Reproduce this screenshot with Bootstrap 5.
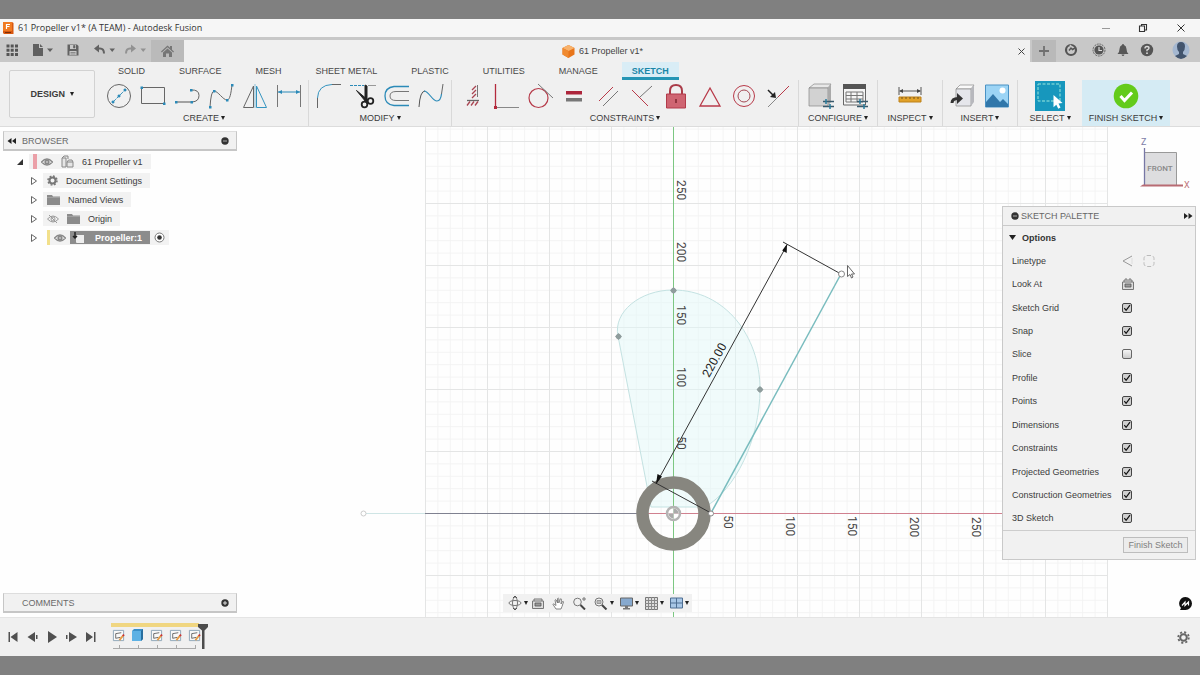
<!DOCTYPE html>
<html lang="en">
<head>
<meta charset="utf-8">
<meta name="viewport" content="width=device-width, initial-scale=1">
<title>61 Propeller v1* (A TEAM) - Autodesk Fusion</title>
<link href="https://cdn.jsdelivr.net/npm/bootstrap@5.3.0/dist/css/bootstrap.min.css" rel="stylesheet">
<style>
  body { font-family: "Liberation Sans", Arial, sans-serif; font-size: 9px; line-height: 12px; color: #3c3c3c; background: #808080; padding: 19px 0; }
  button { border: 0; background: none; padding: 0; color: inherit; font: inherit; line-height: inherit; }
  svg { display: block; flex: none; }
  .window-title { height: 18px; background: #f6f6f6; font-family: "Open Sans", sans-serif; color: #333; padding: 0 14px 0 2px; }
  .tab-strip { height: 25px; background: #c8c8c8; color: #666; }
  .quick-tools { padding-left: 6px; width: 151px; gap: 14px; }
  .home-tab { width: 33px; margin-top: 3px; background: #bababa; }
  .doc-tab { margin-top: 3px; background: #f0f0f0; color: #444; padding-right: 4px; }
  .doc-title { padding-left: 4px; }
  .new-tab { width: 24px; margin: 3px 0 0 2px; background: #b9b9b9; }
  .account-tools { padding: 0 10px 0 8px; gap: 10px; }
  .ribbon { height: 65px; background: #f0f0f0; border-bottom: 1px solid #dcdcdc; }
  .design-btn { width: 86px; height: 48px; margin: 8px 1px 0 9px; border: 1px solid #d2d2d2; border-radius: 2px; font-weight: bold; background: #f2f2f2; }
  .ribbon-tabs { padding-left: 12px; gap: 14px; height: 18px; }
  .ribbon-tabs a { color: #484848; text-decoration: none; padding: 3px 10px 0; }
  .ribbon-tabs a.active { background: #d9edf6; color: #1a86a8; font-weight: bold; border-bottom: 3px solid #2495b5; }
  .tool-group { padding: 0 3px; height: 46px; }
  .tool-group + .tool-group { border-left: 1px solid #d9d9d9; }
  .tool-group.group-first { padding: 0 2px 0 6px; }
  .tool-group.group-wide { padding: 0 5px; }
  .group-single { min-width: 65px; }
  .tool-group.finish { background: #d5ebf4; min-width: 88px; border: 0; }
  .tools { height: 32px; }
  .tool { width: 34px; height: 32px; display: flex; align-items: center; justify-content: center; }
  .caret { display: inline-block; border: 2px solid transparent; border-top: 4px solid #222; border-bottom: 0; margin: 0 0 1px 2px; }
  .workspace { min-height: 490px; background: #fefefe; }
  .drawing { position: absolute; inset: 0; width: 100%; height: 100%; }
  .dock-left { padding-left: 3px; }
  .panel-box { background: #f1f1f1; border: 1px solid #c6c6c6; }
  .side-panel { width: 234px; height: 20px; color: #6a6a6a; padding: 0 7px 0 3px; gap: 6px; border-width: 1px 1px 2px 1px; border-top-color: #ddd; }
  .side-panel .no-arrow { padding-left: 15px; }
  .tree { padding-top: 1px; }
  .tree-row { height: 19px; gap: 5px; }
  .tree-row > .node { background: #f2f2f2; height: 15px; gap: 8px; padding: 0 8px 0 4px; }
  .tree-row > .node-flagged { padding-left: 0; padding-right: 4px; }
  .level-0 { padding-left: 13px; }
  .level-1 { padding-left: 27px; }
  .selected-node { background: #8c8c8c; color: #fff; font-weight: bold; height: 13px; padding: 0 8px 0 2px; gap: 10px; }
  .palette { width: 194px; background: #f1f1f1; border: 1px solid #c9c9c9; }
  .palette-head { height: 19px; border-bottom: 1px solid #cacaca; color: #666; padding: 0 2px 0 8px; gap: 2px; }
  .palette-options { height: 23px; padding-left: 6px; gap: 6px; font-weight: bold; color: #333; }
  .palette-rows { height: 281px; padding-left: 9px; }
  .palette-rows label, .palette-rows .row-label { width: 110px; }
  .palette-rows input { appearance: none; width: 10px; height: 10px; margin: 0; border: 1px solid #666; border-radius: 2px; background: linear-gradient(#f5f5f5, #ccc); }
  .palette-rows input:checked { border-color: #444; background: #d0d0d0 url("data:image/svg+xml,%3Csvg xmlns='http://www.w3.org/2000/svg' viewBox='0 0 8 8'%3E%3Cpath d='M1.3 4.2 3.1 6.4 7 1.2' fill='none' stroke='%23111' stroke-width='1.2'/%3E%3C/svg%3E") center / 8px 8px no-repeat; }
  .palette-foot { height: 29px; border-top: 1px solid #cdcdcd; padding-right: 7px; }
  .finish-btn { width: 65px; height: 16px; border: 1px solid #bdbdbd; color: #808080; background: #ececec; }
  .view-cube { margin: 8px 4px 16px 0; }
  .nav-bar { background: #f1f1f1; height: 18px; padding: 0 3px 0 5px; }
  .nav-bar .caret { margin: 0 0 0 2px; }
  .nav-views { gap: 6px; }
  .timeline { height: 39px; background: #f0f0f0; border-top: 1px solid #e4e4e4; padding: 0 10px 0 6px; }
  .transport { gap: 6px; }
  .features { margin-left: 12px; }
</style>
</head>
<body>
<svg width="0" height="0" class="position-absolute" aria-hidden="true">
  <defs>
    <symbol id="eye" viewBox="0 0 12 10"><path d="M.5 5Q6-1 11.500 5 6 11 .5 5Z" fill="none" stroke="#888" stroke-width="1.300"/><circle cx="6" cy="5" r="2.600" fill="#888"/><circle cx="6" cy="5" r=".8" fill="#eee"/></symbol>
    <symbol id="folder" viewBox="0 0 13 11"><path d="M0 1h5l1 1.500h7V11H0Z" fill="#8b8b8b"/><path d="M0 3.500h13" stroke="#aaa" stroke-width=".7"/></symbol>
    <symbol id="closed" viewBox="0 0 8 10"><path d="M1.500 1.500 6.500 5 1.500 8.500Z" fill="#fff" stroke="#666"/></symbol>
    <symbol id="sketch-step" viewBox="0 0 14 14"><path d="M1.500 1.500h11v11h-11Z" fill="#f8f8f8" stroke="#8ba4b5"/><path d="M4 10V5l6-1M4 10l5-1" fill="none" stroke="#555" stroke-width=".9"/><path d="m8 12 4-5" stroke="#e59b45" stroke-width="2"/><path d="m11.500 7.500 1.500-1.500" stroke="#c33" stroke-width="2"/></symbol>
  </defs>
</svg>

<div class="app d-flex flex-column">
  <header class="window-title d-flex align-items-center">
    <svg width="12" height="14" viewBox="0 0 12 14"><path d="M1 1h9l1.500 1v11H2L1 12Z" fill="#d8570f"/><path d="M1 1h9v9H1Z" fill="#f07a22"/><path d="M4.500 8V3.500H8M4.500 5.500h3" stroke="#fff" stroke-width="1.200" fill="none"/><path d="M3 11.500h6" stroke="#7b2d05"/></svg>
    <span class="ms-1 flex-fill">61 Propeller v1* (A TEAM) - Autodesk Fusion</span>
    <button aria-label="Minimize" class="me-4"><svg width="14" height="10" viewBox="0 0 14 10"><path d="M6 5.500h8" stroke="#999"/></svg></button>
    <button aria-label="Restore" class="ms-1 me-4"><svg width="10" height="10" viewBox="0 0 10 10"><path d="M1.500 3h5v5.500h-5ZM3.500 3V1.500h5v5.500h-2" fill="none" stroke="#333" stroke-width="1.100"/></svg></button>
    <button aria-label="Close"><svg width="10" height="10" viewBox="0 0 10 10" class="ms-1"><path d="m1.500 1.500 7 7m0-7-7 7" stroke="#333"/></svg></button>
  </header>

  <div class="tab-strip d-flex">
    <div class="quick-tools d-flex align-items-center">
      <button aria-label="Data panel"><svg width="12" height="12" viewBox="0 0 12 12" fill="#555"><path d="M.5.5h3v3h-3zM4.700.5h3v3h-3zM9 .5h3v3H9zM.5 4.700h3v3h-3zM4.700 4.700h3v3h-3zM9 4.700h3v3H9zM.5 9h3v3h-3zM4.700 9h3v3h-3zM9 9h3v3H9z"/></svg></button>
      <button aria-label="File" class="d-flex align-items-center"><svg width="21" height="14" viewBox="0 0 21 14" fill="#606060"><path d="M1 1h6v4h4v8H1ZM8 1l3 3H8ZM15 5.500h6L18 9Z"/></svg></button>
      <button aria-label="Save"><svg width="12" height="12" viewBox="0 0 12 12"><path d="M.5.5H10L11.500 2v9.500H.5Z" fill="#626262"/><path d="M3 1h6v4H3ZM2.500 7h7v4h-7Z" fill="#c8c8c8"/><path d="M6.500 1.500h1.500v2.500H6.500ZM3.500 8.500h5M3.500 10h5" fill="#626262" stroke="#626262" stroke-width=".6"/></svg></button>
      <div class="d-flex gap-2">
        <button aria-label="Undo"><svg width="22" height="12" viewBox="0 0 22 12"><path d="M3 4.500h4q4 0 4 5" fill="none" stroke="#626262" stroke-width="2"/><path d="M1 4.500 6 .5v8ZM16.500 4.500H22L19.200 8Z" fill="#626262"/></svg></button>
        <button aria-label="Redo"><svg width="24" height="12" viewBox="0 0 24 12"><path d="M3 9.500q0-5 4-5h4" fill="none" stroke="#929292" stroke-width="2"/><path d="m13 4.500-5-4v8ZM17.500 4.500H23L20.200 8Z" fill="#929292"/></svg></button>
      </div>
    </div>
    <button class="home-tab d-flex justify-content-center align-items-center" aria-label="Home"><svg width="13" height="12" viewBox="0 0 13 12" fill="#767676"><path d="m0 6.500 6.500-6 2.500 2.300V1h2v3.700l2 1.800-.8.900L6.500 2.300.8 7.400ZM2 7.500 6.500 3.500 11 7.500V12H8V8.500H5V12H2Z"/></svg></button>
    <div class="doc-tab d-flex align-items-center flex-fill">
      <div class="doc-title d-flex flex-fill justify-content-center align-items-center">
        <svg width="13" height="13" viewBox="0 0 13 13" class="me-1"><path d="m6.500 0 6 3v6.500l-6 3.500-6-3.500V3Z" fill="#e8751a"/><path d="m6.500 0 6 3-6 3-6-3Z" fill="#f8b26b"/><path d="m.5 3 6 3v7l-6-3.500Z" fill="#f08a30"/></svg>
        61 Propeller v1*
      </div>
      <button aria-label="Close document"><svg width="9" height="9" viewBox="0 0 9 9"><path d="m1.500 1.500 6 6m0-6-6 6" stroke="#444"/></svg></button>
    </div>
    <button class="new-tab d-flex justify-content-center align-items-center" aria-label="New tab"><svg width="10" height="10" viewBox="0 0 10 10"><path d="M0 5h10M5 0v10" stroke="#707070" stroke-width="1.800"/></svg></button>
    <div class="account-tools d-flex align-items-center">
      <button aria-label="Extensions"><svg width="14" height="14" viewBox="0 0 14 14"><circle cx="7" cy="7" r="5" fill="none" stroke="#555" stroke-width="2.200"/><path d="M6 2 8.500 5" stroke="#c8c8c8" stroke-width="1.500"/><path d="m5 7.500 2-2.500 1.500 1.500L11 5" stroke="#555" stroke-width="1.500" fill="none"/></svg></button>
      <button aria-label="Job status" class="ms-1"><svg width="14" height="14" viewBox="0 0 14 14"><circle cx="7" cy="7" r="6" fill="none" stroke="#666" stroke-dasharray="2 .8"/><circle cx="7" cy="7" r="4.600" fill="#555"/><path d="M7 4v3.500h3" stroke="#ddd" stroke-width="1.200" fill="none"/></svg></button>
      <button aria-label="Notifications"><svg width="14" height="14" viewBox="0 0 14 14"><path d="M7 1q1 0 1 1 2.500.8 2.500 4 0 3 2 5h-11q2-2 2-5 0-3.200 2.500-4 0-1 1-1ZM5.500 11.500h3Q8 13 7 13t-1.500-1.500Z" fill="#585858"/></svg></button>
      <button aria-label="Help"><svg width="14" height="14" viewBox="0 0 14 14"><circle cx="7" cy="7" r="6.200" fill="#555"/><path d="M5 5.500q0-2 2-2t2 1.600Q9 6.200 7 7v1.200" fill="none" stroke="#d8d8d8" stroke-width="1.400"/><circle cx="7" cy="10.200" r=".9" fill="#ddd"/></svg></button>
      <button aria-label="Account" class="ms-2"><svg width="18" height="20" viewBox="0 0 18 20"><circle cx="9" cy="10" r="8.500" fill="#a4b7d0"/><path d="M9 2q4 0 4 4.500Q13 10 11 12v2l4 2q-3 3-6 3t-6-3l4-2v-2Q5 10 5 6.500 5 2 9 2Z" fill="#42546d"/></svg></button>
    </div>
  </div>

  <div class="ribbon d-flex">
    <button class="design-btn">DESIGN <span class="caret"></span></button>
    <div class="flex-fill">
      <nav class="ribbon-tabs d-flex">
        <a href="#">SOLID</a><a href="#">SURFACE</a><a href="#">MESH</a><a href="#">SHEET METAL</a><a href="#">PLASTIC</a><a href="#">UTILITIES</a><a href="#">MANAGE</a><a href="#" class="active">SKETCH</a>
      </nav>
      <div class="d-flex text-center">
        <div class="tool-group group-first">
          <div class="tools d-flex">
            <button class="tool" aria-label="Circle"><svg width="26" height="26" viewBox="0 0 26 26"><circle cx="13" cy="13" r="11.500" fill="none" stroke="#666"/><path d="M7 19 19 7" stroke="#3a94bd" stroke-dasharray="4 1"/><path d="M6 18h2v2H6zM12 12h2v2h-2zM18 6h2v2h-2z" fill="#2b8ab8" stroke="#2b8ab8" stroke-width=".7"/></svg></button>
            <button class="tool" aria-label="Rectangle"><svg width="26" height="26" viewBox="0 0 26 26"><path d="M1.500 4.500h23v16h-23Z" fill="none" stroke="#666"/><path d="M.5 3.500H3V6H.5zM23 19.500h2.500V22H23z" fill="#2b8ab8"/></svg></button>
            <button class="tool" aria-label="Slot"><svg width="26" height="26" viewBox="0 0 26 26"><path d="M2 19h16" stroke="#555"/><path d="M18 19q7-.5 7-6.500T17 7" fill="none" stroke="#666"/><path d="M1 18h2.500v2.500H1zM16.500 18H19v2.500h-2.500zM16 6h2.500v2.500H16z" fill="#2b8ab8"/></svg></button>
            <button class="tool" aria-label="Spline"><svg width="26" height="26" viewBox="0 0 26 26"><path d="M2 24Q3 8 6 8c4 0 9 9 13 9 3 0 4-7 5-15" fill="none" stroke="#666"/><path d="M1 23h2.500v2.500H1zM5 7h2.500v2.500H5zM18 16h2.500v2.500H18zM23 1h2.500v2.500H23z" fill="#2b8ab8"/></svg></button>
            <button class="tool" aria-label="Mirror"><svg width="26" height="26" viewBox="0 0 26 26"><path d="M11.500 3v21.500H1.500Z" fill="none" stroke="#666"/><path d="M14.500 3v21.500h10Z" fill="none" stroke="#3494c0"/><path d="M13 1v24" stroke="#8cc0d8"/></svg></button>
            <button class="tool" aria-label="Dimension"><svg width="26" height="26" viewBox="0 0 26 26"><path d="M1.500 2v22M24.500 2v22" stroke="#777"/><path d="M2 9h22" stroke="#2b8ab8"/><path d="m2 9 4-2v4ZM24 9l-4-2v4Z" fill="#2b8ab8"/></svg></button>
          </div>
          <div>CREATE<span class="caret"></span></div>
        </div>
        <div class="tool-group">
          <div class="tools d-flex">
            <button class="tool" aria-label="Fillet"><svg width="26" height="26" viewBox="0 0 26 26" fill="none"><path d="M1.500 25V15M16 1.500h9" stroke="#666"/><path d="M1.500 15Q2 2 16 1.500" stroke="#3494c0"/></svg></button>
            <button class="tool" aria-label="Trim"><svg width="26" height="26" viewBox="0 0 26 26" fill="none"><path d="M0 2.500h14" stroke="#2b8ab8" stroke-dasharray="3 1"/><path d="M18 2.500h8" stroke="#999"/><path d="M6.500 7.500 18 17l-2 2Z" fill="#222" stroke="#222"/><path d="m15 2 2 1v14l-2 1Z" fill="#222" stroke="#222"/><circle cx="14.500" cy="21.500" r="2.800" stroke="#222" stroke-width="1.800"/><circle cx="20.500" cy="18" r="2.800" stroke="#222" stroke-width="1.800"/></svg></button>
            <button class="tool" aria-label="Offset"><svg width="26" height="26" viewBox="0 0 26 26" fill="none"><path d="M25 3.500H10Q1 4.500 1 13t9 9.500h15" stroke="#2b8ab8" stroke-width="1.300"/><path d="M25 8.500H12q-6 0-6 4.500t6 4.500h13" stroke="#777"/></svg></button>
            <button class="tool" aria-label="Edit curve"><svg width="26" height="26" viewBox="0 0 26 26" fill="none"><path d="M1 24Q2 8 7 8" stroke="#555"/><path d="M6 8c5 0 8 10 13 10 3 0 4-3 4.500-7" stroke="#2b8ab8" stroke-width="1.200"/><path d="M23.500 11 25 1" stroke="#666"/></svg></button>
          </div>
          <div>MODIFY<span class="caret"></span></div>
        </div>
        <div class="tool-group">
          <div class="tools d-flex">
            <button class="tool" aria-label="Horizontal/Vertical"><svg width="26" height="26" viewBox="0 0 26 26" fill="none" stroke="#a94552"><path d="M18.500 2v12" stroke="#777"/><path d="M8 17.500h12" stroke="#666" stroke-width="1.300"/><path d="m13 7 4-4M13 11l4-4M13 15l4-4M8 22.500l3-4M12 22.500l3-4M16 22.500l3-4" stroke-width="1.300"/></svg></button>
            <button class="tool" aria-label="Perpendicular"><svg width="26" height="26" viewBox="0 0 26 26"><path d="M2.500 1v23" stroke="#b42a3d" stroke-width="1.300"/><path d="M2 24.500h24" stroke="#888"/><path d="M1 23h3v3H1z" fill="#b42a3d"/></svg></button>
            <button class="tool" aria-label="Tangent"><svg width="26" height="26" viewBox="0 0 26 26" fill="none"><circle cx="11.500" cy="15" r="9.500" stroke="#b63a49" stroke-width="1.200"/><path d="m11 1 15 14" stroke="#777"/></svg></button>
            <button class="tool" aria-label="Equal"><svg width="26" height="26" viewBox="0 0 26 26"><path d="M5 8h16v3.500H5Z" fill="#ad253b"/><path d="M5 15h16v3.500H5Z" fill="#777"/></svg></button>
            <button class="tool" aria-label="Parallel"><svg width="26" height="26" viewBox="0 0 26 26"><path d="M4 18 18 4M8 23 23 8" stroke="#777"/><path d="M4 18 18 4" stroke="#b83a49"/></svg></button>
            <button class="tool" aria-label="Midpoint"><svg width="26" height="26" viewBox="0 0 26 26"><path d="m3 7 16 16" stroke="#b83a49"/><path d="M11 14 23 3" stroke="#777"/></svg></button>
            <button class="tool" aria-label="Fix"><svg width="26" height="26" viewBox="0 0 26 26"><path d="M7 12V8q0-6 6-6t6 6v4" fill="none" stroke="#aa3c49" stroke-width="2"/><path d="M3.500 11h19v14h-19Z" fill="#cf6572" stroke="#b23b4a"/><path d="M13 16v4" stroke="#7e2631" stroke-width="1.500"/></svg></button>
            <button class="tool" aria-label="Symmetry"><svg width="26" height="26" viewBox="0 0 26 26"><path d="M13 5 23 23H3Z" fill="none" stroke="#b83a49" stroke-width="1.300"/></svg></button>
            <button class="tool" aria-label="Concentric"><svg width="26" height="26" viewBox="0 0 26 26" fill="none"><circle cx="13" cy="13" r="10.500" stroke="#b83a49"/><circle cx="13" cy="13" r="6" stroke="#a44853"/></svg></button>
            <button class="tool" aria-label="Collinear"><svg width="26" height="26" viewBox="0 0 26 26"><path d="m3 24 10-10" stroke="#888"/><path d="M13 14 24 3" stroke="#b83a49"/><path d="m3 7 5 5" stroke="#222" stroke-width="1.500"/><path d="m11 15-6-1 5-5Z" fill="#222"/></svg></button>
          </div>
          <div>CONSTRAINTS<span class="caret"></span></div>
        </div>
        <div class="tool-group group-wide">
          <div class="tools d-flex">
            <button class="tool" aria-label="Configure design"><svg width="26" height="26" viewBox="0 0 26 26"><path d="m1 5 5-4h17l-3 4Z" fill="#e8e8e8" stroke="#888" stroke-width=".7"/><path d="M1 5h19v18H1Z" fill="#d2d2d2" stroke="#888" stroke-width=".7"/><path d="m20 5 3-4v18l-3 4Z" fill="#aaa"/><path d="M15 18.500h11M15 23.500h11" stroke="#38596b" stroke-width="1.300"/><path d="M18 16v5M22 21v5" stroke="#277c9d" stroke-width="1.500"/></svg></button>
            <button class="tool" aria-label="Configuration table"><svg width="26" height="26" viewBox="0 0 26 26"><path d="M1.500 2h22v20h-22Z" fill="#f5f5f5" stroke="#666"/><path d="M1 1h23v5H1Z" fill="#555"/><path d="M4 9h17v10H4ZM4 12.500h17M4 16h17M9 9v10M15 9v10" fill="none" stroke="#777"/><path d="M15 18.500h11M15 23.500h11" stroke="#38596b" stroke-width="1.300"/><path d="M18 16v5M22 21v5" stroke="#277c9d" stroke-width="1.500"/></svg></button>
          </div>
          <div>CONFIGURE<span class="caret"></span></div>
        </div>
        <div class="tool-group group-single">
          <div class="tools d-flex justify-content-center"><button class="tool" aria-label="Measure"><svg width="26" height="26" viewBox="0 0 26 26"><path d="M2 4v8M24 4v8M3 8h20" stroke="#555"/><path d="m2 8 4-2v4ZM24 8l-4-2v4Z" fill="#444"/><path d="M2 14h22v5H2Z" fill="#e1a128" stroke="#bd811b"/><path d="M5 14v2M9 14v2M13 14v2M17 14v2M21 14v2" stroke="#765216"/></svg></button></div>
          <div>INSPECT<span class="caret"></span></div>
        </div>
        <div class="tool-group">
          <div class="tools d-flex">
            <button class="tool" aria-label="Insert component"><svg width="26" height="26" viewBox="0 0 26 26"><path d="m6 6 4-4h14l-3 4Z" fill="#fafafa" stroke="#888" stroke-width=".7"/><path d="M6 6h15v17H6Z" fill="#e5e6eb" stroke="#888" stroke-width=".7"/><path d="m21 6 3-4v17l-3 4Z" fill="#b7b8bd"/><path d="M2 20q0-4.500 6-4.500" fill="none" stroke="#333" stroke-width="3"/><path d="m7 10 6 5.500L7 21Z" fill="#333"/></svg></button>
            <button class="tool" aria-label="Canvas"><svg width="26" height="26" viewBox="0 0 26 26"><path d="M1.500 2h23v22h-23Z" fill="#9cd4f5" stroke="#4a92c4"/><path d="m2 19 7-8 7 8 3-3 5 5v3H2Z" fill="#3177aa"/><circle cx="18.500" cy="7.500" r="3" fill="#fff"/></svg></button>
          </div>
          <div>INSERT<span class="caret"></span></div>
        </div>
        <div class="tool-group group-single">
          <div class="tools d-flex justify-content-center"><button class="tool" aria-label="Select"><svg width="30" height="30" viewBox="0 0 30 30"><path d="M0 0h30v30H0Z" fill="#1797bd"/><path d="M3 3h22v17H3Z" fill="none" stroke="#9be8dd" stroke-dasharray="3 1.500"/><path d="m18.500 14 9 8-4 .5 2 4-2.200 1.200-2-4-2.800 2.500Z" fill="#fff"/></svg></button></div>
          <div>SELECT<span class="caret"></span></div>
        </div>
        <div class="tool-group finish">
          <div class="tools d-flex justify-content-center"><button class="tool" aria-label="Finish sketch"><svg width="26" height="26" viewBox="0 0 26 26"><circle cx="13" cy="13" r="12.300" fill="#63cb1b"/><path d="m7.500 13 4 4.500 7.500-8" fill="none" stroke="#fff" stroke-width="3"/></svg></button></div>
          <div class="text-nowrap">FINISH SKETCH<span class="caret"></span></div>
        </div>
      </div>
    </div>
  </div>

  <main class="workspace position-relative d-flex flex-column">
    <svg class="drawing" viewBox="0 127 1200 490" role="img" aria-label="Sketch canvas">
      <defs>
        <pattern id="fine" x="673" y="513" width="12.4" height="12.4" patternUnits="userSpaceOnUse"><path d="M0 .5H12.400M.5 0V12.400" stroke="#f3f3f3"/></pattern>
        <pattern id="coarse" x="673" y="513" width="62" height="62" patternUnits="userSpaceOnUse"><path d="M0 .5H62M.5 0V62" stroke="#e4e5e5"/></pattern>
      </defs>
      <path d="M425 127h683v490H425Z" fill="url(#fine)"/>
      <path d="M425 127h683v490H425Z" fill="url(#coarse)"/>
      <path d="M618 336C613 312 640 290 673 290C725 290 760 336 760 389C760 440 735 490 705 507H651Z" fill="#dff8f8" fill-opacity=".45" stroke="#c4e2e2"/>
      <path d="M363 513.500h62" stroke="#cfe5e5"/><path d="M425 513.500h212" stroke="#7f8190"/><path d="M637 513.500h366" stroke="#d0808f"/>
      <path d="M673.500 127v490" stroke="#7cc782"/>
      <circle cx="673.500" cy="513.500" r="31" fill="none" stroke="#87867f" stroke-width="12.500"/>
      <circle cx="673.500" cy="513.500" r="6.500" fill="#fff" fill-opacity=".6" stroke="#b4b4b4" stroke-width="2.500"/>
      <path d="M673.500 513.500v-5a5 5 0 0 1 5 5ZM673.500 513.500v5a5 5 0 0 1-5-5Z" fill="#aaa"/>
      <path d="M711 513 841 274" stroke="#79bcbe" stroke-width="1.500"/>
      <path d="M652 481 711 513M783 242 841 274M656 484 787 245" stroke="#333" fill="none"/>
      <path d="m787 244-.3 9-4.500-2.500ZM656 484l6-7.500-4.500-2.500Z" fill="#111"/>
      <g fill="#8f9d9d"><path d="m673.500 287 3.500 3.500-3.500 3.500-3.500-3.500ZM618.500 333l3.500 3.500-3.500 3.500-3.500-3.500ZM760 386l3.500 3.500-3.500 3.500-3.500-3.500Z"/><circle cx="673.500" cy="290.500" r="2.500"/><circle cx="618.500" cy="336.500" r="2.500"/><circle cx="760" cy="389.500" r="2.500"/></g>
      <g fill="#fff" stroke="#888"><circle cx="711" cy="513.500" r="2.500"/><circle cx="841.500" cy="274" r="3"/><circle cx="363.500" cy="513.500" r="2.500" stroke="#ccc"/></g>
      <path d="M847.500 265.500v11l2.500-2 1.500 3.500 1.500-1-1.500-3h3Z" fill="#fff" stroke="#555" stroke-width=".9"/>
      <g font-family="Roboto, sans-serif" font-size="12" fill="#444" text-anchor="middle">
        <text transform="translate(677 190) rotate(90)">250</text><text transform="translate(677 252) rotate(90)">200</text><text transform="translate(677 315) rotate(90)">150</text><text transform="translate(677 377) rotate(90)">100</text><text transform="translate(677 443) rotate(90)">50</text>
        <text transform="translate(724 522) rotate(90)">50</text><text transform="translate(786 526) rotate(90)">100</text><text transform="translate(848 526) rotate(90)">150</text><text transform="translate(910 527) rotate(90)">200</text><text transform="translate(972 527) rotate(90)">250</text>
        <text transform="translate(718 362) rotate(-61)" fill="#222">220.00</text>
      </g>
    </svg>

    <div class="position-relative d-flex justify-content-between flex-fill">
      <aside class="dock-left mt-1">
        <div class="panel-box side-panel d-flex align-items-center">
          <svg width="9" height="6" viewBox="0 0 9 6"><path d="m4.500 0-4 3 4 3ZM9 0 5 3l4 3Z" fill="#222"/></svg>
          <span class="flex-fill">BROWSER</span>
          <button aria-label="Collapse browser"><svg width="8" height="8" viewBox="0 0 8 8"><circle cx="4" cy="4" r="3.700" fill="#333"/><path d="M2 4h4" stroke="#aaa"/></svg></button>
        </div>
        <div class="tree">
          <div class="tree-row level-0 d-flex align-items-center">
            <svg width="8" height="8" viewBox="0 0 8 8"><path d="M7 1v6H1Z" fill="#333"/></svg>
            <div class="node d-flex align-items-center ps-1">
              <div class="d-flex align-items-center gap-1"><svg width="4" height="15" viewBox="0 0 4 15"><path d="M0 0h4v15H0Z" fill="#eba0a8"/></svg><svg width="12" height="10"><use href="#eye"/></svg></div>
              <svg width="13" height="13" viewBox="0 0 13 13"><path d="M1 3 3 1h4v3M1 3h4v9H1ZM6 7h6v5H6ZM6 7l1.500-2H11l1 2" fill="#e5e5e5" stroke="#888"/></svg><span>61 Propeller v1</span>
            </div>
          </div>
          <div class="tree-row level-1 d-flex align-items-center"><svg width="8" height="10"><use href="#closed"/></svg><div class="node d-flex align-items-center"><svg width="11" height="11" viewBox="0 0 11 11"><circle cx="5.500" cy="5.500" r="3" fill="none" stroke="#777" stroke-width="2"/><circle cx="5.500" cy="5.500" r="4.500" fill="none" stroke="#777" stroke-width="1.500" stroke-dasharray="1.800 1.730"/></svg><span>Document Settings</span></div></div>
          <div class="tree-row level-1 d-flex align-items-center"><svg width="8" height="10"><use href="#closed"/></svg><div class="node d-flex align-items-center"><svg width="13" height="11"><use href="#folder"/></svg><span>Named Views</span></div></div>
          <div class="tree-row level-1 d-flex align-items-center"><svg width="8" height="10"><use href="#closed"/></svg><div class="node d-flex align-items-center"><svg width="12" height="10" viewBox="0 0 12 10" fill="none" stroke="#999"><path d="M.5 5Q6-1 11.500 5 6 11 .5 5ZM2 1l8 8"/><circle cx="6" cy="5" r="2"/></svg><svg width="13" height="11"><use href="#folder"/></svg><span>Origin</span></div></div>
          <div class="tree-row level-1 d-flex align-items-center"><svg width="8" height="10"><use href="#closed"/></svg><div class="node node-flagged d-flex align-items-center gap-1 ms-1"><svg width="3" height="15" viewBox="0 0 3 15"><path d="M0 0h3v15H0Z" fill="#f2e08b"/></svg><svg width="12" height="10"><use href="#eye"/></svg><div class="selected-node d-flex align-items-center"><svg width="13" height="12" viewBox="0 0 13 12"><path d="M4 4q0-1 1-1h7v8H5q-1 0-1-1Z" fill="#eee"/><path d="M3 0v6M1 4l2 2 2-2" stroke="#222" fill="none" stroke-width="1.500"/></svg>Propeller:1</div><svg width="11" height="11" viewBox="0 0 11 11"><circle cx="5.500" cy="5.500" r="4.500" fill="#fff" stroke="#777"/><circle cx="5.500" cy="5.500" r="2.300" fill="#333"/></svg></div></div>
        </div>
      </aside>

      <div class="d-flex flex-column align-items-end me-1">
        <svg class="view-cube" width="54" height="55" viewBox="0 0 54 55"><path d="M6.500 17.500h32v33h-32Z" fill="#dddddf" stroke="#999"/><path d="M6.500 13v38" stroke="#7777a5" stroke-width="1.300"/><path d="M5 49.500h40v2H2Z" fill="#b86b73"/><g font-family="Roboto, sans-serif" font-size="9"><text x="22" y="36" font-size="8" text-anchor="middle" font-weight="500" fill="#888">FRONT</text><text x="3" y="10" fill="#7d7da8">Z</text><text x="46" y="53" fill="#be747b">X</text></g></svg>
        <aside class="palette">
          <div class="palette-head d-flex align-items-center"><svg width="8" height="8" viewBox="0 0 8 8"><circle cx="4" cy="4" r="3.700" fill="#333"/><path d="M2 4h4" stroke="#aaa"/></svg><span class="flex-fill">SKETCH PALETTE</span><svg width="9" height="6" viewBox="0 0 9 6"><path d="m0 0 4 3-4 3ZM4.500 0l4 3-4 3Z" fill="#222"/></svg></div>
          <div class="palette-options d-flex align-items-center"><svg width="7" height="5" viewBox="0 0 7 5"><path d="M0 0h7L3.500 5Z" fill="#222"/></svg><span>Options</span></div>
          <div class="palette-rows d-flex flex-column">
            <div class="d-flex flex-fill align-items-center"><span class="row-label">Linetype</span><svg width="12" height="12" viewBox="0 0 12 12"><path d="m10 1-9 5 9 5" fill="none" stroke="#999"/><path d="M10 3v6" stroke="#ddd"/></svg><svg width="13" height="12" viewBox="0 0 13 12" class="ms-2"><rect x="2" y=".5" width="10" height="11" rx="3" fill="none" stroke="#bbb" stroke-dasharray="4 2"/></svg></div>
            <div class="d-flex flex-fill align-items-center"><span class="row-label">Look At</span><button aria-label="Look At"><svg width="12" height="12" viewBox="0 0 12 12"><path d="M.5 4h11v7.500H.5ZM2 4V2h8v2M4 2V0M8 2V0" fill="#ddd" stroke="#777"/><path d="M3 6h6v3H3Z" fill="#999" stroke="#555" stroke-width=".8"/></svg></button></div>
            <div class="d-flex flex-fill align-items-center"><label for="grid">Sketch Grid</label><input type="checkbox" id="grid" checked></div>
            <div class="d-flex flex-fill align-items-center"><label for="snap">Snap</label><input type="checkbox" id="snap" checked></div>
            <div class="d-flex flex-fill align-items-center"><label for="slice">Slice</label><input type="checkbox" id="slice"></div>
            <div class="d-flex flex-fill align-items-center"><label for="profile">Profile</label><input type="checkbox" id="profile" checked></div>
            <div class="d-flex flex-fill align-items-center"><label for="points">Points</label><input type="checkbox" id="points" checked></div>
            <div class="d-flex flex-fill align-items-center"><label for="dims">Dimensions</label><input type="checkbox" id="dims" checked></div>
            <div class="d-flex flex-fill align-items-center"><label for="cons">Constraints</label><input type="checkbox" id="cons" checked></div>
            <div class="d-flex flex-fill align-items-center"><label for="proj">Projected Geometries</label><input type="checkbox" id="proj" checked></div>
            <div class="d-flex flex-fill align-items-center"><label for="constr">Construction Geometries</label><input type="checkbox" id="constr" checked></div>
            <div class="d-flex flex-fill align-items-center"><label for="three">3D Sketch</label><input type="checkbox" id="three" checked></div>
          </div>
          <div class="palette-foot d-flex align-items-center justify-content-end"><button class="finish-btn">Finish Sketch</button></div>
        </aside>
      </div>
    </div>

    <div class="position-relative row g-0 align-items-center mb-1">
      <div class="col dock-left"><div class="panel-box side-panel d-flex align-items-center"><span class="no-arrow flex-fill">COMMENTS</span><button aria-label="Add comment"><svg width="8" height="8" viewBox="0 0 8 8"><circle cx="4" cy="4" r="3.700" fill="#333"/><path d="M2 4h4M4 2v4" stroke="#ddd"/></svg></button></div></div>
      <div class="col-auto nav-bar d-flex align-items-center">
        <button aria-label="Orbit" class="d-flex align-items-center me-1"><svg width="14" height="14" viewBox="0 0 14 14" fill="none" stroke="#777"><ellipse cx="7" cy="7" rx="6" ry="2.500"/><ellipse cx="7" cy="7" rx="2.500" ry="6"/><path d="m5 2 2-2 2 2M5 12l2 2 2-2" stroke="#555"/></svg><span class="caret"></span></button>
        <button aria-label="Look At" class="me-2"><svg width="12" height="12" viewBox="0 0 12 12"><path d="M.5 4h11v7.500H.5ZM2 4V2h8v2" fill="#ddd" stroke="#777"/><path d="M3 6h6v3H3Z" fill="#999" stroke="#555" stroke-width=".8"/></svg></button>
        <button aria-label="Pan" class="me-2"><svg width="13" height="13" viewBox="0 0 13 13"><path d="M4 12 1 7.500q0-1 1-.5l2 1.500L3 3q.5-1 1.200 0L5.500 6V1.500q.7-1 1.300 0V6l1.500-4q1-.7 1.200.2L9 7l1.500-2.500q1-.5 1 .5L10 9.500 9 12Z" fill="#fff" stroke="#777" stroke-width=".9"/></svg></button>
        <button aria-label="Zoom" class="me-2"><svg width="13" height="13" viewBox="0 0 13 13" fill="none"><circle cx="4.500" cy="5" r="3.800" stroke="#777"/><path d="m7.500 8 4.500 4.500" stroke="#444" stroke-width="2"/><path d="M9 2h4M11 0v4" stroke="#777"/></svg></button>
        <div class="nav-views d-flex align-items-center">
          <button aria-label="Fit" class="d-flex align-items-center"><svg width="14" height="13" viewBox="0 0 14 13" fill="none"><circle cx="5" cy="5" r="4" stroke="#777"/><path d="M3 3.500h4v3H3Z" fill="#bbb" stroke="#999"/><path d="m8 8 4.500 4.500" stroke="#444" stroke-width="2"/></svg><span class="caret"></span></button>
          <button aria-label="Display settings" class="d-flex align-items-center"><svg width="13" height="13" viewBox="0 0 13 13"><path d="M.5 1h12v8H.5Z" fill="#87a9ce" stroke="#666"/><path d="M5 9h3v2h2v1.500H3V11h2Z" fill="#777"/></svg><span class="caret"></span></button>
          <button aria-label="Grid" class="d-flex align-items-center"><svg width="13" height="13" viewBox="0 0 13 13"><path d="M.5.5h12v12H.5Z" fill="#ddd" stroke="#777"/><path d="M3.500 0v13M6.500 0v13M9.500 0v13M0 3.500h13M0 6.500h13M0 9.500h13" stroke="#888"/></svg><span class="caret"></span></button>
          <button aria-label="Viewports" class="d-flex align-items-center"><svg width="13" height="12" viewBox="0 0 13 12"><path d="M.5 1h12v10H.5ZM6.500 1v10M0 6h13" fill="#a7c6e6" stroke="#4f6f93"/></svg><span class="caret"></span></button>
        </div>
      </div>
      <div class="col d-flex justify-content-end pe-2"><button aria-label="Assistant"><svg width="13" height="13" viewBox="0 0 13 13"><path d="M6.500 0a6.500 6.500 0 1 1 0 13H1l1-2A6.500 6.500 0 0 1 6.500 0Z" fill="#111"/><path d="M3 8.500 6 5v3.500L9.500 5v3.500" fill="none" stroke="#fff" stroke-width="1.200"/></svg></button></div>
    </div>
  </main>

  <footer class="timeline d-flex align-items-center">
    <div class="transport d-flex align-items-center">
      <button aria-label="Start"><svg width="14" height="12" viewBox="0 0 14 12" fill="#505050"><path d="M2.500 1h1.500v10H2.500ZM11.500 1v10L4.500 6Z"/></svg></button>
      <button aria-label="Step back"><svg width="14" height="12" viewBox="0 0 14 12" fill="#505050"><path d="M9 1v10L1.500 6ZM10 4h1.500v4H10Z"/></svg></button>
      <button aria-label="Play"><svg width="13" height="12" viewBox="0 0 13 12" fill="#505050"><path d="M2 0v12l9-6Z"/></svg></button>
      <button aria-label="Step forward"><svg width="13" height="12" viewBox="0 0 13 12" fill="#505050"><path d="M4 1v10l8-5ZM1 4h1.500v4H1Z"/></svg></button>
      <button aria-label="End"><svg width="14" height="12" viewBox="0 0 14 12" fill="#505050"><path d="M2 1v10l7-5ZM10 1h1.500v10H10Z"/></svg></button>
    </div>
    <svg class="features" width="100" height="28" viewBox="0 0 100 28" role="img" aria-label="Design history">
      <path d="M1 0h88v4H1Z" fill="#f0d681"/>
      <path d="M3 25.500h82M9.500 22v4M28.500 22v4M47.500 22v4M66.500 22v4M85.500 22v4" stroke="#aaa" fill="none"/>
      <use href="#sketch-step" x="2" y="6" width="13" height="13"/>
      <path d="m22 8 2-2h9v10l-2 2h-9Z" fill="#398fc8"/><path d="M22 8h9v10h-9Z" fill="#5db1e4"/><path d="m31 8 2-2v10l-2 2Z" fill="#286e9e"/>
      <use href="#sketch-step" x="40" y="6" width="13" height="13"/><use href="#sketch-step" x="59" y="6" width="13" height="13"/><use href="#sketch-step" x="78" y="6" width="13" height="13"/>
      <path d="M88 1h10v3l-3.500 3.500V26h-2.500V7.500L88 4Z" fill="#4c4c4c"/>
    </svg>
    <button aria-label="Timeline settings" class="ms-auto"><svg width="13" height="13" viewBox="0 0 13 13" fill="none" stroke="#666"><circle cx="6.500" cy="6.500" r="3.300" stroke-width="2"/><circle cx="6.500" cy="6.500" r="5.300" stroke-width="1.800" stroke-dasharray="2.100 2.060"/></svg></button>
  </footer>
</div>
<script src="https://cdn.jsdelivr.net/npm/bootstrap@5.3.0/dist/js/bootstrap.bundle.min.js"></script>
</body>
</html>
